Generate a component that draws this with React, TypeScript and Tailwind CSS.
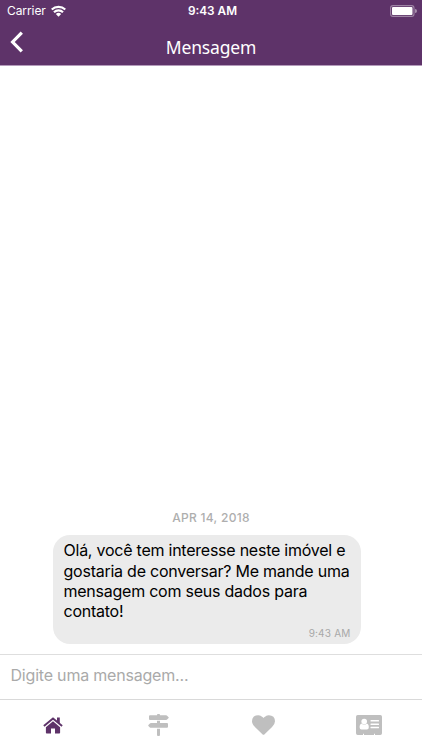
import React from 'react';

interface IconProps {
  className?: string;
}

function WifiIcon({ className }: IconProps) {
  return (
    <svg viewBox="0 0 14 11" className={className} fill="none" stroke="currentColor" strokeWidth="2">
      <path d="M0.700 4.200A9 9 0 0 1 13.300 4.200" />
      <path d="M2.800 6.700A5.900 5.900 0 0 1 11.200 6.700" />
      <path d="M4.500 8.300A3.600 3.600 0 0 1 9.500 8.300L7 10.900Z" fill="currentColor" stroke="none" />
    </svg>
  );
}

function BatteryIcon({ className }: IconProps) {
  return (
    <svg viewBox="0 0 27 12" className={className}>
      <rect x="0.6" y="0.6" width="23.4" height="10.8" rx="2.4" fill="none" stroke="#fff" strokeOpacity="0.4" strokeWidth="1.1" />
      <rect x="2" y="2" width="20.5" height="8" rx="1" fill="#fff" />
      <path d="M25 4a2 2 0 0 1 0 4z" fill="#fff" fillOpacity="0.45" />
    </svg>
  );
}

function BackIcon({ className }: IconProps) {
  return (
    <svg viewBox="0 0 14 22" className={className} fill="none" stroke="currentColor" strokeWidth="3.2">
      <path d="M11.800 1.600L2.600 11L11.800 20.400" />
    </svg>
  );
}

function HomeIcon({ className }: IconProps) {
  return (
    <svg viewBox="0 0 20 17" className={className} fill="currentColor">
      <path d="M0.900 9.100L10 1.500L19.100 9.100" fill="none" stroke="currentColor" strokeWidth="1.900" />
      <path d="M14 .6h2.800v6.200L14 4.500z" />
      <path d="M10 4.300L17.100 10.200V15.800Q17.100 16.600 16.300 16.600H12V11.600H8V16.600H3.700Q2.900 16.600 2.900 15.800V10.200Z" />
    </svg>
  );
}

function SignsIcon({ className }: IconProps) {
  return (
    <svg viewBox="0 0 21 22" className={className} fill="currentColor">
      <path d="M9 .8Q9 0 10 0h1Q12 0 12 .8v.5h6.200q.5 0 .9.400l1.500 1.500q.4.400 0 .8l-1.500 1.500q-.4.400-.9.400H2Q1 5.900 1 4.900V2.300q0-1 1-1h7z" />
      <path d="M9 6.700h3v2.400h7q1 0 1 1v2.700q0 1-1 1H2.800q-.5 0-.9-.4L.4 11.900q-.4-.4 0-.8l1.500-1.600q.4-.4.900-.4H9z" />
      <path d="M9 14.700h3v6.300q0 1-1 1h-1q-1 0-1-1z" />
    </svg>
  );
}

function HeartIcon({ className }: IconProps) {
  return (
    <svg viewBox="0 128 1792 1536" className={className} fill="currentColor">
      <path d="M896 1664q-26 0-44-18l-624-602q-10-8-27.500-26t-55.500-65.500-68-97.500-53.500-121-23.500-138q0-220 127-344t351-124q62 0 126.500 21.500t120 58 95.500 68.500 76 68q36-36 76-68t95.500-68.500 120-58 126.500-21.500q224 0 351 124t127 344q0 221-229 450l-623 600q-18 18-44 18z" />
    </svg>
  );
}

function CardIcon({ className }: IconProps) {
  return (
    <svg viewBox="0 0 26 20" className={className}>
      <path fill="currentColor" d="M1.700 0h22.600Q26 0 26 1.700v16.600Q26 20 24.300 20H19v-1.300h-1V20H8v-1.300H7V20H1.700Q0 20 0 18.300V1.700Q0 0 1.700 0z" />
      <g fill="#fff">
        <circle cx="8.200" cy="6.600" r="2.800" />
        <path d="M5.600 8.400Q8.200 10.900 10.800 8.400q2 .4 2 3.900 0 2.300-1.900 2.300H5.500q-1.900 0-1.900-2.300 0-3.500 2-3.900z" />
        <rect x="14.500" y="5" width="8.500" height="1.500" rx=".5" />
        <rect x="14.500" y="8.400" width="8.500" height="1.500" rx=".5" />
        <rect x="14.500" y="11.800" width="8.500" height="1.500" rx=".5" />
      </g>
    </svg>
  );
}

function Header() {
  return (
    <header className="h-[66px] bg-[#5e3369] text-white border-b border-[#b49bbb]">
      <div className="grid grid-cols-3 items-center h-[22px] pl-[7px] pr-[5px] text-[12px] leading-[22px]">
        <div className="flex items-center gap-[5px]">
          <span className="tracking-[-0.08px]">Carrier</span>
          <WifiIcon className="w-[15px] h-[12px]" />
        </div>
        <span className="text-center font-semibold text-[11.8px] pl-[1px]">9:43 AM</span>
        <BatteryIcon className="w-[27px] h-[12px] justify-self-end" />
      </div>
      <div className="grid grid-cols-3 h-[43px] pl-[10px] pr-[10px]">
        <BackIcon className="w-[14px] h-[22px] mt-[9px]" />
        <h1 className="text-center font-['Noto_Sans',sans-serif] text-[17.5px] tracking-[-0.15px] leading-[24px] mt-[13px]">Mensagem</h1>
      </div>
    </header>
  );
}

function MessageBubble() {
  return (
    <div className="ml-[53px] w-[308px] h-[109px] rounded-[17px] bg-[#ebebeb] pl-[10.5px] pr-[10.5px] pt-[5.4px] flex flex-col">
      <p className="text-[16px] leading-[20.3px] tracking-[-0.24px] text-black whitespace-nowrap">
        Olá, você tem interesse neste imóvel e<br />
        gostaria de conversar? Me mande uma<br />
        mensagem com seus dados para<br />
        contato!
      </p>
      <span className="self-end mt-[4.600px] text-[10px] leading-[14px] tracking-[0.2px] text-[#a8a8a8]">9:43 AM</span>
    </div>
  );
}

function TabBar() {
  return (
    <nav className="grid grid-cols-4 h-[51px] border-t border-[#d9d9d9] text-[#bfbfbf] justify-items-center items-center">
      <HomeIcon className="w-[20px] h-[17px] text-[#5e3369]" />
      <SignsIcon className="w-[21px] h-[22px]" />
      <HeartIcon className="w-[23px] h-[20px]" />
      <CardIcon className="w-[26px] h-[20px]" />
    </nav>
  );
}

export default function App() {
  return (
    <div className="w-[422px] h-[750px] flex flex-col bg-white overflow-hidden font-['Inter','Liberation_Sans',sans-serif]">
      <Header />
      <main className="flex-1 flex flex-col justify-end pb-[10px]">
        <div className="text-center text-[12px] leading-[16px] mb-[9px] font-medium tracking-[0.3px] text-[#aeaeae]">APR 14, 2018</div>
        <MessageBubble />
      </main>
      <div className="h-[45px] border-t border-[#dedede] px-[10.5px]">
        <input
          type="text"
          placeholder="Digite uma mensagem..."
          className="w-full h-[40px] text-[16px] tracking-[-0.2px] bg-transparent outline-none placeholder:text-[#aaaaaa]"
        />
      </div>
      <TabBar />
    </div>
  );
}
